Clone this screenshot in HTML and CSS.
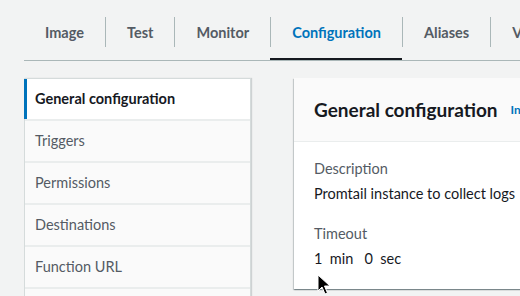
FILE: index.html
```html
<!DOCTYPE html>
<html lang="en">
<head>
    <meta charset="UTF-8">
    <meta name="viewport" content="width=device-width, initial-scale=1.0">
    <title>Configuration</title>
    <link rel="stylesheet" href="styles.css">
</head>
<body>
    <ul class="tabs">
        <li class="tab"><span class="tab-label">Image</span></li>
        <li class="tab"><span class="tab-label">Test</span></li>
        <li class="tab"><span class="tab-label">Monitor</span></li>
        <li class="tab active"><span class="tab-label">Configuration</span></li>
        <li class="tab"><span class="tab-label">Aliases</span></li>
        <li class="tab"><span class="tab-label">Versions</span></li>
    </ul>

    <div class="layout">
        <nav class="side-nav">
            <a class="nav-item active">General configuration</a>
            <a class="nav-item">Triggers</a>
            <a class="nav-item">Permissions</a>
            <a class="nav-item">Destinations</a>
            <a class="nav-item">Function URL</a>
            <a class="nav-item">Environment variables</a>
        </nav>

        <section class="panel">
            <div class="panel-header">
                <h2>General configuration</h2>
                <a class="info-link">Info</a>
            </div>
            <div class="panel-body">
                <div class="field">
                    <div class="field-label">Description</div>
                    <div class="field-value">Promtail instance to collect logs</div>
                </div>
                <div class="field">
                    <div class="field-label">Timeout</div>
                    <div class="field-value">1&nbsp; min &nbsp; 0&nbsp; sec</div>
                </div>
            </div>
        </section>
    </div>

    <!-- mouse pointer caught in the screenshot -->
    <svg class="cursor" width="14" height="22" viewBox="0 0 14 22">
        <path d="M1 1 L1 17 L5 13 L8 20 L10.5 19 L7.5 12 L13 12 Z" fill="#000" stroke="#fff" stroke-width="1"/>
    </svg>
</body>
</html>
```

FILE: styles.css
```css
body {
    margin: 0;
    background-color: #f2f3f3;
    font-family: Lato, "Noto Sans", sans-serif;
    font-size: 14.5px;
    color: #16191f;
    overflow: hidden;
}
.tabs {
    display: flex;
    margin: 0 0 0 24px;
    padding: 0;
    list-style: none;
    border-bottom: 1px solid #aab7b8;
    white-space: nowrap;
}
.tab {
    padding: 17px 0 11px;
    border-bottom: 2px solid transparent;
}
.tab-label {
    display: block;
    height: 30px;
    line-height: 31px;
    padding: 0 21px;
    font-weight: 700;
    color: #545b64;
}
.tab + .tab .tab-label {
    border-left: 1px solid #aab7b8;
}
.tab.active {
    border-bottom-color: #16191f;
}
.tab.active .tab-label {
    color: #0073bb;
}
.layout {
    display: flex;
    gap: 43px;
    margin: 17px 0 0 24px;
}
.side-nav {
    flex: 0 0 225px;
    display: flex;
    flex-direction: column;
    background-color: #eaeded;
    border: 1px solid #d5dbdb;
    border-bottom: none;
    box-shadow: 1px 0 1px rgba(0, 28, 36, 0.15);
}
.nav-item {
    display: block;
    height: 40px;
    line-height: 39px;
    padding-left: 10px;
    margin-bottom: 2px;
    background-color: #fafafa;
    color: #545b64;
    white-space: nowrap;
}
.nav-item.active {
    background-color: #fff;
    color: #16191f;
    font-weight: 700;
    border-left: 3px solid #0073bb;
    margin-left: -1px;
    padding-left: 8px;
}
.panel {
    flex: 0 0 auto;
    width: 260px;
    height: 211px;
    background-color: #fff;
    box-shadow: 0 1px 1px rgba(0, 28, 36, 0.3), 1px 1px 1px rgba(0, 28, 36, 0.15), -1px 1px 1px rgba(0, 28, 36, 0.15);
}
.panel-header {
    display: flex;
    align-items: center;
    gap: 13px;
    height: 63px;
    padding-left: 20px;
    background-color: #fafafa;
    border-bottom: 1px solid #eaeded;
    white-space: nowrap;
}
.panel-header h2 {
    margin: 0;
    font-size: 19px;
    font-weight: 700;
}
.info-link {
    font-size: 12px;
    font-weight: 700;
    color: #0073bb;
}
.panel-body {
    padding: 16px 20px 20px;
}
.field + .field {
    margin-top: 18px;
}
.field-label {
    line-height: 22px;
    color: #545b64;
}
.field-value {
    padding-top: 2px;
    line-height: 23px;
    white-space: nowrap;
}
.cursor {
    position: absolute;
    left: 317px;
    top: 274px;
}
```
